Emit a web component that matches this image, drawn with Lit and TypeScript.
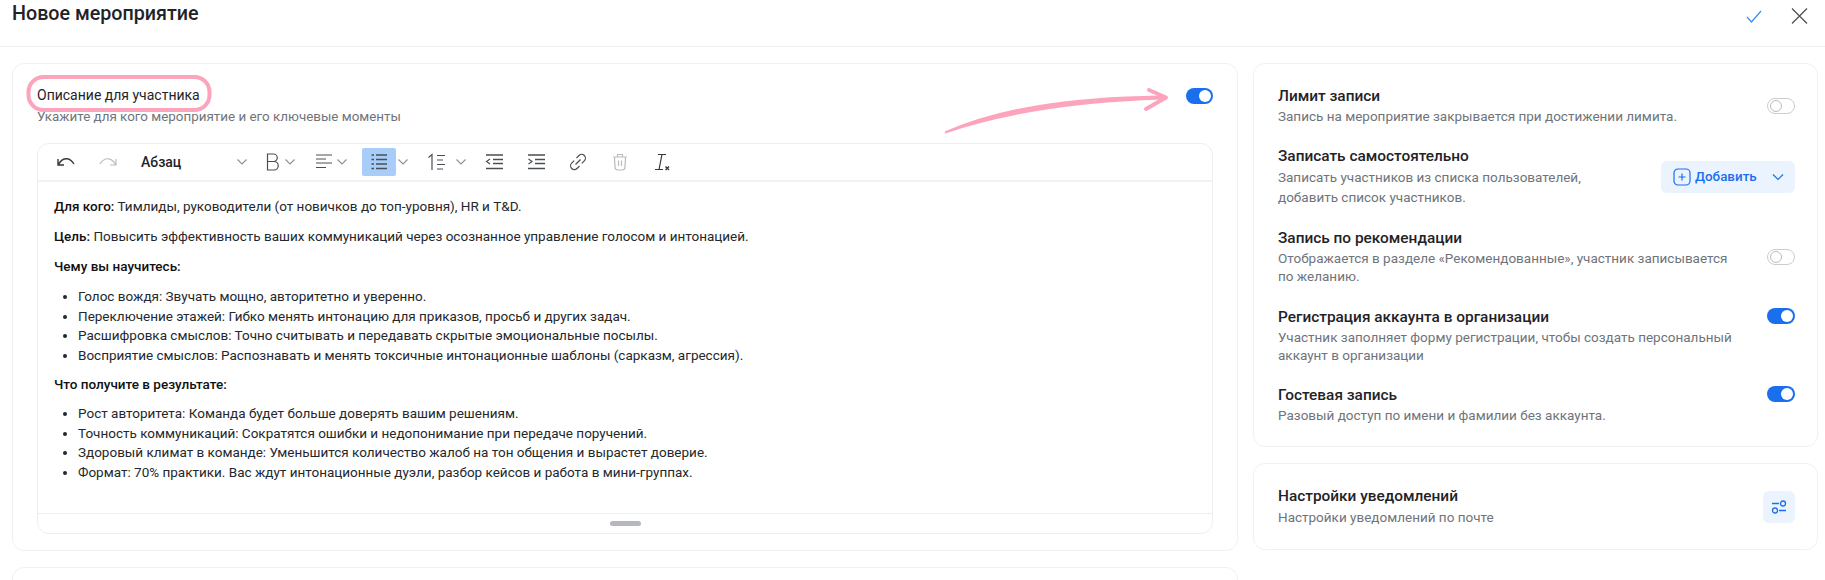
import { LitElement, html, css, svg } from "lit";
import { customElement } from "lit/decorators.js";

const chev = html`<svg class="chev" width="12" height="8" viewBox="0 0 12 8"><path d="M1.5 1.5 6 6l4.5-4.5" fill="none" stroke="#8a8f96" stroke-width="1.1"/></svg>`;
const ic = (w: number, body: unknown) => html`<svg width="${w}" height="20" viewBox="0 0 ${w} 20" fill="none" stroke="#4a4f55" stroke-width="1.2">${body}</svg>`;

@customElement("app-root")
export class AppRoot extends LitElement {
  static styles = css`
    :host { display: block; width: 1825px; height: 580px; overflow: hidden; position: relative; background: #fff; color: #1f2328; font-family: Roboto, "Noto Sans", sans-serif; font-size: 14px; }
    * { box-sizing: border-box; }
    .head { height: 47px; border-bottom: 1px solid #f0f1f3; display: flex; justify-content: space-between; padding: 0 17px 0 12px; }
    .head h1 { margin: 0; font-size: 19.7px; line-height: 28px; font-weight: 500; }
    .head-actions { display: flex; gap: 29px; height: 32px; align-items: center; }
    .main { display: grid; grid-template-columns: 1226px 565px; gap: 15px; padding: 16px 0 0 12px; }
    .col { display: flex; flex-direction: column; gap: 16px; }
    .card { border: 1px solid #f0f1f3; border-radius: 12px; background: #fff; }
    .desc-card { padding: 21px 24px 16px; }
    .label-row { display: flex; justify-content: space-between; }
    .label { font-size: 14px; line-height: 20px; }
    .sub { font-size: 13.4px; line-height: 20px; color: #6f747a; margin-top: 2px; }
    .toggle { width: 28px; height: 16px; border-radius: 8px; background: #1a6fee; position: relative; flex: none; }
    .toggle::after { content: ""; position: absolute; right: 2px; top: 2px; width: 12px; height: 12px; border-radius: 50%; background: #fff; }
    .toggle.off { background: #fff; border: 1.5px solid #c9ccd0; }
    .toggle.off::after { left: 1.5px; right: auto; top: 1.5px; width: 10px; height: 10px; background: #fff; border: 1px solid #b8bbc0; }
    .label-row .toggle { margin-top: 3px; width: 27px; }
    .editor { margin-top: 16px; border: 1px solid #eceef0; border-radius: 12px; height: 391px; display: flex; flex-direction: column; }
    .toolbar { height: 38px; flex: none; border-bottom: 2px solid #f1f2f4; display: flex; align-items: center; padding-left: 17px; }
    .toolbar svg { flex: none; display: block; }
    .para { width: 107px; margin-left: 22px; font-size: 14px; font-weight: 500; display: flex; justify-content: space-between; align-items: center; }
    .active { width: 34px; height: 28px; background: #a8cdf8; border-radius: 2px; display: flex; align-items: center; justify-content: center; }
    .body { flex: 1; padding: 15px 14px 0 16px; font-size: 13.5px; line-height: 19.6px; color: #24282c; }
    .body p { margin: 0 0 10.5px; }
    .body b { font-weight: 500; color: #111; }
    .body ul { margin: 0 0 9.5px; padding-left: 24px; }
    .body ul + p { margin-bottom: 9.5px; }
    .foot { height: 20px; flex: none; border-top: 1px solid #eceef0; display: flex; justify-content: center; align-items: center; }
    .grip { width: 31px; height: 5px; border-radius: 3px; background: #b5b8bc; }
    .stub { height: 60px; }
    .settings { padding: 22px 22px 24px 24px; height: 384px; display: flex; flex-direction: column; gap: 21px; }
    .row { display: flex; align-items: center; justify-content: space-between; }
    .row .toggle.top { align-self: flex-start; margin-top: 1px; }
    .row.shift { margin-top: 1px; }
    .t { font-size: 15.4px; line-height: 20px; font-weight: 500; }
    .d { font-size: 13.5px; line-height: 18px; color: #6f747a; margin-top: 1px; }
    .d.loose { line-height: 20px; }
    .txt { width: 465px; }
    .add { flex: none; width: 134px; height: 32px; background: #eaf3fe; border-radius: 6px; display: flex; align-items: center; gap: 4px; padding-left: 12px; color: #1a6fee; font-weight: 500; font-size: 13.4px; }
    .note { height: 87px; padding: 0 22px 0 24px; display: flex; align-items: center; justify-content: space-between; }
    .note .d { margin-top: 2px; }
    .note-txt { margin-bottom: 2px; }
    .icon-btn { width: 32px; height: 32px; background: #eaf3fe; border-radius: 6px; display: flex; align-items: center; justify-content: center; }
    .overlay { position: absolute; left: 0; top: 0; pointer-events: none; }
    .m1 { margin-left: 1px; } .m2 { margin-left: 2px; } .m4 { margin-left: 4px; } .m10 { margin-left: 10px; }
    .m14 { margin-left: 14px; } .m16 { margin-left: 16px; } .m17 { margin-left: 17px; } .m18 { margin-left: 18px; }
    .m20 { margin-left: 20px; } .m21 { margin-left: 21px; } .m22 { margin-left: 22px; }
    .add-chev { margin-left: 10px; }
  `;

  render() {
    return html`
      <div class="head">
        <h1>Новое мероприятие</h1>
        <div class="head-actions">
          <svg width="16" height="13" viewBox="0 0 16 13"><path d="M1 7 5.500 12 15 1" fill="none" stroke="#3d8bef" stroke-width="1.200"/></svg>
          <svg width="17" height="16" viewBox="0 0 17 16"><path d="M1 .5l15 15M16 .5l-15 15" fill="none" stroke="#4a4f55" stroke-width="1.200"/></svg>
        </div>
      </div>
      <div class="main">
        <div class="col">
          <div class="card desc-card">
            <div class="label-row">
              <div>
                <div class="label">Описание для участника</div>
                <div class="sub">Укажите для кого мероприятие и его ключевые моменты</div>
              </div>
              <div class="toggle"></div>
            </div>
            <div class="editor">
              <div class="toolbar">
                ${ic(22, svg`<path d="M3 7v6h6M3.500 12.500C7 6 14 4 19 12" stroke="#33383d" stroke-width="1.400"/>`)}
                <span class="m20">${ic(22, svg`<path d="M19 7v6h-6M18.500 12.500C15 6 8 4 3 12" stroke="#b9bcc0"/>`)}</span>
                <div class="para"><span>Абзац</span>${chev}</div>
                <span class="m16">${ic(16, svg`<path d="M3.500 2h6a3.500 3.500 0 0 1 0 7.500h-6zM3.500 9.500h6.500a4 4 0 0 1 0 8.500h-6.500z"/>`)}</span>
                <span class="m4">${chev}</span>
                <span class="m18">${ic(20, svg`<path d="M2 3h16M2 7h10M2 11h16M2 15.500h10" />`)}</span>
                <span class="m2">${chev}</span>
                <span class="m14 active">${ic(18, svg`<path d="M6 3h11M6 7.500h11M6 12h11M6 16.500h11" stroke-width="1.300"/><path d="M1.500 3h2.500M1.500 7.500h2.500M1.500 12h2.500M1.500 16.500h2.500" stroke-width="1.500"/>`)}</span>
                <span class="m1">${chev}</span>
                <span class="m16">${ic(20, svg`<path d="M7 18V2.500L3.500 5.500M12 3.500h8M12 8h6M12 12.500h8M12 17h6"/>`)}</span>
                <span class="m10">${chev}</span>
                <span class="m17">${ic(20, svg`<path d="M2 3h17M9 7.500h10M9 11.500h10M2 16.500h17" stroke-width="1.400"/><path d="M6 7 2.500 9.500 6 12"/>`)}</span>
                <span class="m22">${ic(20, svg`<path d="M2 3h17M9 7.500h10M9 11.500h10M2 16.500h17" stroke-width="1.400"/><path d="M2.500 7 6 9.500 2.500 12"/>`)}</span>
                <span class="m22">${ic(20, svg`<path d="M8.500 6 11 3.500a3.700 3.700 0 0 1 5.300 5.300L13.800 11.300M11.500 14 9 16.500a3.700 3.700 0 0 1-5.300-5.300L6.200 8.700M7.500 12.500l5-5"/>`)}</span>
                <span class="m22">${ic(20, svg`<g stroke="#b9bcc0"><path d="M3 5h14M7.500 5V2.500h5V5M4.500 5l.5 10a3 3 0 0 0 3 3h4a3 3 0 0 0 3-3l.5-10M8.500 8.500v5.500M11.500 8.500v5.500"/></g>`)}</span>
                <span class="m21">${ic(20, svg`<path d="M7 2.500h8M11 2.500 8 17.500M4 17.500h8" stroke="#33383d"/><path d="M14.500 14.500l3.500 3.500M18 14.500l-3.500 3.500" stroke="#33383d" stroke-width="1.400"/>`)}</span>
              </div>
              <div class="body">
                <p><b>Для кого:</b> Тимлиды, руководители (от новичков до топ-уровня), HR и T&amp;D.</p>
                <p><b>Цель:</b> Повысить эффективность ваших коммуникаций через осознанное управление голосом и интонацией.</p>
                <p><b>Чему вы научитесь:</b></p>
                <ul>
                  <li>Голос вождя: Звучать мощно, авторитетно и уверенно.</li>
                  <li>Переключение этажей: Гибко менять интонацию для приказов, просьб и других задач.</li>
                  <li>Расшифровка смыслов: Точно считывать и передавать скрытые эмоциональные посылы.</li>
                  <li>Восприятие смыслов: Распознавать и менять токсичные интонационные шаблоны (сарказм, агрессия).</li>
                </ul>
                <p><b>Что получите в результате:</b></p>
                <ul>
                  <li>Рост авторитета: Команда будет больше доверять вашим решениям.</li>
                  <li>Точность коммуникаций: Сократятся ошибки и недопонимание при передаче поручений.</li>
                  <li>Здоровый климат в команде: Уменьшится количество жалоб на тон общения и вырастет доверие.</li>
                  <li>Формат: 70% практики. Вас ждут интонационные дуэли, разбор кейсов и работа в мини-группах.</li>
                </ul>
              </div>
              <div class="foot"><div class="grip"></div></div>
            </div>
          </div>
          <div class="card stub"></div>
        </div>
        <div class="col">
          <div class="card settings">
            <div class="row">
              <div class="txt"><div class="t">Лимит записи</div><div class="d">Запись на мероприятие закрывается при достижении лимита.</div></div>
              <div class="toggle off"></div>
            </div>
            <div class="row">
              <div class="txt"><div class="t">Записать самостоятельно</div><div class="d loose">Записать участников из списка пользователей,<br />добавить список участников.</div></div>
              <div class="add">
                <svg width="18" height="18" viewBox="0 0 18 18" fill="none" stroke="#1a6fee" stroke-width="1.200"><rect x="1" y="1" width="16" height="16" rx="4"/><path d="M9 5.500v7M5.500 9h7"/></svg>
                <span>Добавить</span>
                <svg class="add-chev" width="14" height="8" viewBox="0 0 14 8"><path d="M2 1.500 7 6.500l5-5" fill="none" stroke="#1a6fee" stroke-width="1.200"/></svg>
              </div>
            </div>
            <div class="row">
              <div class="txt"><div class="t">Запись по рекомендации</div><div class="d">Отображается в разделе «Рекомендованные», участник записывается по желанию.</div></div>
              <div class="toggle off"></div>
            </div>
            <div class="row shift">
              <div class="txt"><div class="t">Регистрация аккаунта в организации</div><div class="d">Участник заполняет форму регистрации, чтобы создать персональный аккаунт в организации</div></div>
              <div class="toggle top"></div>
            </div>
            <div class="row">
              <div class="txt"><div class="t">Гостевая запись</div><div class="d">Разовый доступ по имени и фамилии без аккаунта.</div></div>
              <div class="toggle top"></div>
            </div>
          </div>
          <div class="card note">
            <div class="note-txt"><div class="t">Настройки уведомлений</div><div class="d">Настройки уведомлений по почте</div></div>
            <div class="icon-btn">
              <svg width="16" height="16" viewBox="0 0 16 16" fill="none" stroke="#1a6fee" stroke-width="1.300"><path d="M1 4.500h7M8 11.500h7"/><circle cx="12" cy="4.500" r="2.500"/><circle cx="4" cy="11.500" r="2.500"/></svg>
            </div>
          </div>
        </div>
      </div>
      <svg class="overlay" width="1825" height="580" viewBox="0 0 1825 580" fill="none">
        <rect x="28.500" y="77" width="181" height="33" rx="15" stroke="#fda4bd" stroke-width="4"/>
        <path d="M945 132.500C1000 108 1070 98 1160 96.500L1163 98.500C1080 101 1005 112 945 132.500Z" fill="#fda4bd" stroke="#fda4bd" stroke-width="2"/>
        <path d="M1149 90 1166 97.500 1146 109" stroke="#fda4bd" stroke-width="4" stroke-linejoin="round" stroke-linecap="round"/>
      </svg>
    `;
  }
}
